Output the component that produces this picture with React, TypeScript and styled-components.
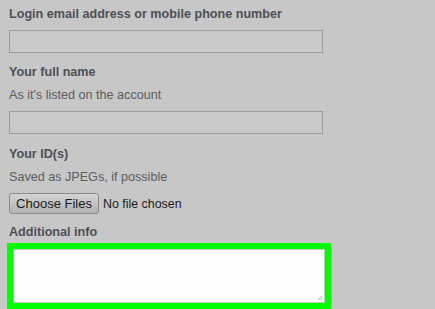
import styled, { createGlobalStyle } from "styled-components";

const Global = createGlobalStyle`
  html, body {
    margin: 0;
    padding: 0;
    background: #c7c7c7;
    font-family: "Liberation Sans", Arial, sans-serif;
  }
`;

const Form = styled.div`
  display: flex;
  flex-direction: column;
  padding: 6px 0 0 9px;
  width: 314px;
`;

const Label = styled.div<{ $gap?: number }>`
  font-size: 12.6px;
  line-height: 16px;
  font-weight: bold;
  color: #4e5058;
  margin-top: ${(p) => p.$gap ?? 0}px;
`;

const Hint = styled.div`
  font-size: 12.6px;
  line-height: 16px;
  color: #5c5d63;
  margin-top: 7px;
`;

const TextField = styled.div`
  box-sizing: border-box;
  height: 23px;
  width: 314px;
  margin-top: 8px;
  border: 1px solid #9b9ca6;
  background: #c9c9c9;
`;

const FileRow = styled.div`
  display: flex;
  align-items: center;
  gap: 4px;
  margin-top: 8px;
  font-size: 12.4px;
  color: #1c1c1c;
`;

const FileButton = styled.div`
  box-sizing: border-box;
  height: 21px;
  width: 90px;
  display: flex;
  align-items: center;
  justify-content: center;
  border: 1px solid #8a8a8a;
  border-radius: 3px;
  background: linear-gradient(#d4d4d4, #b3b3b3);
  color: #1a1a1a;
  font-size: 13px;
`;

const Highlight = styled.div`
  box-sizing: border-box;
  margin: 3px 0 0 -2px;
  width: 324px;
  height: 66px;
  border: 6px solid #00ff00;
`;

const TextArea = styled.div`
  position: relative;
  box-sizing: border-box;
  height: 100%;
  background: #fdfdfd;
  border: 1px solid #c0c8c0;
`;

const Grip = styled.svg`
  position: absolute;
  right: 1px;
  bottom: 1px;
`;

export default function App() {
  return (
    <>
      <Global />
      <Form>
        <Label>Login email address or mobile phone number</Label>
        <TextField />
        <Label $gap={11}>Your full name</Label>
        <Hint>As it's listed on the account</Hint>
        <TextField />
        <Label $gap={12}>Your ID(s)</Label>
        <Hint>Saved as JPEGs, if possible</Hint>
        <FileRow>
          <FileButton>Choose Files</FileButton>
          <span>No file chosen</span>
        </FileRow>
        <Label $gap={10}>Additional info</Label>
        <Highlight>
          <TextArea>
            <Grip width="6" height="6" viewBox="0 0 6 6">
              <path d="M5 1L1 5M5 3.5L3.5 5" stroke="#999" strokeWidth="0.8" />
            </Grip>
          </TextArea>
        </Highlight>
      </Form>
    </>
  );
}
